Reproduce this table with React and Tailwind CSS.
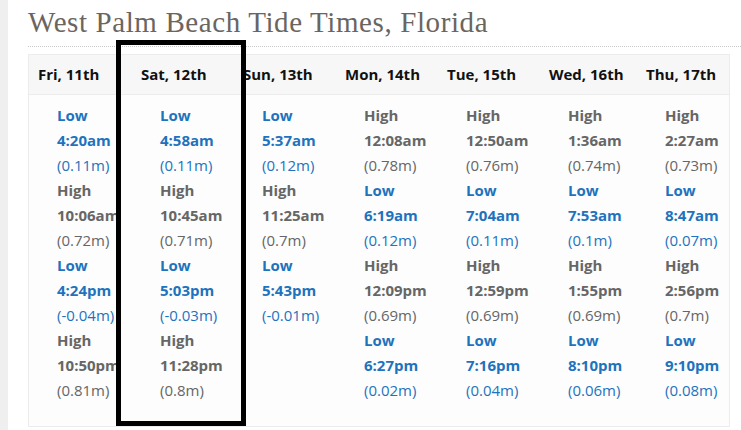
import React from 'react';

const days = [
  {
    label: 'Fri, 11th',
    tides: [
      ['Low', '4:20am', '(0.11m)'],
      ['High', '10:06am', '(0.72m)'],
      ['Low', '4:24pm', '(-0.04m)'],
      ['High', '10:50pm', '(0.81m)'],
    ],
  },
  {
    label: 'Sat, 12th',
    tides: [
      ['Low', '4:58am', '(0.11m)'],
      ['High', '10:45am', '(0.71m)'],
      ['Low', '5:03pm', '(-0.03m)'],
      ['High', '11:28pm', '(0.8m)'],
    ],
  },
  {
    label: 'Sun, 13th',
    tides: [
      ['Low', '5:37am', '(0.12m)'],
      ['High', '11:25am', '(0.7m)'],
      ['Low', '5:43pm', '(-0.01m)'],
    ],
  },
  {
    label: 'Mon, 14th',
    tides: [
      ['High', '12:08am', '(0.78m)'],
      ['Low', '6:19am', '(0.12m)'],
      ['High', '12:09pm', '(0.69m)'],
      ['Low', '6:27pm', '(0.02m)'],
    ],
  },
  {
    label: 'Tue, 15th',
    tides: [
      ['High', '12:50am', '(0.76m)'],
      ['Low', '7:04am', '(0.11m)'],
      ['High', '12:59pm', '(0.69m)'],
      ['Low', '7:16pm', '(0.04m)'],
    ],
  },
  {
    label: 'Wed, 16th',
    tides: [
      ['High', '1:36am', '(0.74m)'],
      ['Low', '7:53am', '(0.1m)'],
      ['High', '1:55pm', '(0.69m)'],
      ['Low', '8:10pm', '(0.06m)'],
    ],
  },
  {
    label: 'Thu, 17th',
    tides: [
      ['High', '2:27am', '(0.73m)'],
      ['Low', '8:47am', '(0.07m)'],
      ['High', '2:56pm', '(0.7m)'],
      ['Low', '9:10pm', '(0.08m)'],
    ],
  },
];

function Tide({ type, time, height }) {
  const color = type === 'Low' ? 'text-[#1e73be]' : 'text-[#666]';
  return (
    <div className={color}>
      <div className="font-bold">{type}</div>
      <div className="font-bold">{time}</div>
      <div>{height}</div>
    </div>
  );
}

export default function App() {
  return (
    <div className="relative flex w-[741px] h-[430px] overflow-hidden bg-white">
      <div className="w-2 shrink-0 bg-[#efefef]" />
      <div className="flex-1 pl-5">
        <h1 className="pt-[4px] h-[47px] border-b border-dotted border-[#c8c8c8] text-[29px] leading-[36px] tracking-[0.6px] whitespace-nowrap text-[#6b6560] font-['Liberation_Serif',serif]">
          West Palm Beach Tide Times, Florida
        </h1>
        <div className="mt-[7px] w-[702px] border border-[#ececec] font-['Open_Sans',sans-serif] text-[15px]">
          <div className="grid grid-cols-[103px_102px_102px_102px_102px_97px_93px] h-[40px] items-center bg-[#f7f7f7] border-b border-[#ececec] font-bold text-[#111]">
            {days.map((d) => (
              <div key={d.label} className="pl-[9px] whitespace-nowrap">
                {d.label}
              </div>
            ))}
          </div>
          <div className="grid grid-cols-[103px_102px_102px_102px_102px_97px_93px] h-[331px] pt-2 leading-[25px] bg-[#fdfdfd]">
            {days.map((d) => (
              <div key={d.label} className="pl-[28px] whitespace-nowrap">
                {d.tides.map((t, i) => (
                  <Tide key={i} type={t[0]} time={t[1]} height={t[2]} />
                ))}
              </div>
            ))}
          </div>
        </div>
      </div>
      <div className="absolute left-[116px] top-[40px] w-[130px] h-[386px] border-[5px] border-black" />
    </div>
  );
}
